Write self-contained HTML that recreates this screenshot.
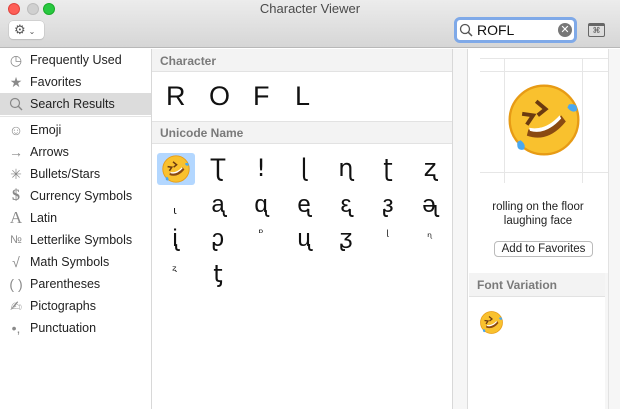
<!DOCTYPE html><html><head><meta charset="utf-8"><style>
*{margin:0;padding:0;box-sizing:border-box}
body{width:620px;height:409px;overflow:hidden;font-family:"Liberation Sans","DejaVu Sans",sans-serif;background:#fff;position:relative;font-size:12px;color:#222}
.abs{position:absolute}
#tb{left:0;top:0;width:620px;height:48px;background:linear-gradient(#ececec,#d6d6d6);border-bottom:1px solid #b8b8b8}
.dot{width:12px;height:12px;border-radius:50%;top:3px}
#side{left:0;top:49px;width:152px;height:360px;background:#fff;border-right:1px solid #d8d8d8}
.it{position:absolute;left:0;width:151px;height:22px;line-height:22px;padding-left:30px;font-size:12.5px;color:#222}
.ic{position:absolute;left:7px;top:0;width:18px;text-align:center;color:#8a8a8a;font-size:14px}
.hd{background:#f3f3f3;color:#7a7a7a;font-weight:bold;font-size:12px;padding-left:8px;line-height:22px;height:23px;border-bottom:1px solid #e2e2e2}
.g{position:absolute;width:40px;text-align:center;font-family:"DejaVu Sans",sans-serif;color:#111}
</style></head><body>
<div id="tb" class="abs"></div>
<div class="abs dot" style="left:8px;background:#fe5f57;border:1px solid #e0443e"></div>
<div class="abs dot" style="left:27px;background:#d0d0d0;border:1px solid #bdbdbd"></div>
<div class="abs dot" style="left:43px;background:#28c840;border:1px solid #1aab29"></div>
<div class="abs" style="left:0;top:1px;width:620px;text-align:center;font-size:13px;color:#4a4a4a">Character Viewer</div>
<div class="abs" style="left:9px;top:21px;width:35px;height:18px;background:#fff;border-radius:4px;box-shadow:0 0 0 0.5px #c0c0c0,0 1px 1px rgba(0,0,0,.15);font-size:13px;color:#555;line-height:18px;padding-left:5px">⚙<span style="font-size:8px;margin-left:3px">⌄</span></div>
<div class="abs" style="left:454px;top:17px;width:123px;height:26px;border:3px solid #7fa9e8;border-radius:6px;background:#fff"></div>
<svg class="abs" style="left:459px;top:23px" width="14" height="14"><circle cx="6" cy="6" r="4.5" fill="none" stroke="#555" stroke-width="1.3"/><line x1="9.3" y1="9.3" x2="13" y2="13" stroke="#555" stroke-width="1.5"/></svg>
<div class="abs" style="left:477px;top:22px;font-size:14px;color:#111">ROFL</div>
<div class="abs" style="left:558px;top:23px;width:14px;height:14px;border-radius:50%;background:#777;color:#fff;font-size:11px;line-height:14px;text-align:center;font-weight:bold">✕</div>
<div class="abs" style="left:588px;top:23px;width:17px;height:14px;border:1px solid #666;border-top:3px solid #666;border-radius:2px;font-size:8px;text-align:center;line-height:9px;color:#555">⌘</div>

<div id="side" class="abs">
<div class="it" style="top:0"><span class="ic">◷</span>Frequently Used</div>
<div class="it" style="top:22px"><span class="ic">★</span>Favorites</div>
<div class="it" style="top:44px;background:#dcdcdc"><svg class="abs" style="left:9px;top:4px" width="14" height="14"><circle cx="6" cy="6" r="4.5" fill="none" stroke="#888" stroke-width="1.2"/><line x1="9.3" y1="9.3" x2="13" y2="13" stroke="#888" stroke-width="1.4"/></svg>Search Results</div>
<div class="abs" style="left:0;top:67px;width:151px;height:1px;background:#e5e5e5"></div>
<div class="it" style="top:70px"><span class="ic">☺</span>Emoji</div>
<div class="it" style="top:92px"><span class="ic">→</span>Arrows</div>
<div class="it" style="top:114px"><span class="ic">✳</span>Bullets/Stars</div>
<div class="it" style="top:136px"><span class="ic" style="font-family:'Liberation Serif';font-size:16px;font-weight:bold">$</span>Currency Symbols</div>
<div class="it" style="top:158px"><span class="ic" style="font-family:'Liberation Serif';font-size:17px">A</span>Latin</div>
<div class="it" style="top:180px"><span class="ic" style="font-size:11px">№</span>Letterlike Symbols</div>
<div class="it" style="top:202px"><span class="ic">√</span>Math Symbols</div>
<div class="it" style="top:224px"><span class="ic">( )</span>Parentheses</div>
<div class="it" style="top:246px"><span class="ic">✍</span>Pictographs</div>
<div class="it" style="top:268px"><span class="ic">•,</span>Punctuation</div>
</div>

<div class="abs" style="left:152px;top:49px;width:301px;height:360px;background:#fff;border-right:1px solid #d8d8d8">
<div class="hd" style="padding-top:1px">Character</div>
<div style="height:49px;font-size:27px;color:#111;line-height:48px;padding-left:14px"><span style="display:inline-block;width:43px">R</span><span style="display:inline-block;width:44px">O</span><span style="display:inline-block;width:42px">F</span><span>L</span></div>
<div class="hd" style="border-top:1px solid #e2e2e2">Unicode Name</div>
</div>
<div class="abs" style="left:453px;top:49px;width:15px;height:360px;background:#f6f6f6;border-right:1px solid #dcdcdc"></div>
<div class="abs" style="left:608px;top:49px;width:12px;height:360px;background:#f6f6f6;border-left:1px solid #e2e2e2"></div>

<div class="abs" style="left:157px;top:153px;width:38px;height:32px;background:#b3d7ff;border-radius:3px"></div>
<svg width="0" height="0" style="position:absolute"><defs><g id="em"><circle cx="50" cy="50" r="44" fill="#f9c12e"/><circle cx="50" cy="50" r="44" fill="none" stroke="#e79b15" stroke-width="3"/><path d="M28 70 Q55 80 78 52 L72 44 Q52 66 30 62Z" fill="#8a4a12"/><path d="M32 64 Q52 70 72 48 L70 44 Q52 64 31 60Z" fill="#fff"/><path d="M40 26 L52 36 L42 44 M22 42 L36 44 L28 56" fill="none" stroke="#6b3a10" stroke-width="5"/><path d="M82 30 q12 -2 10 8 q-6 4 -12 -4z M16 78 q-2 12 8 10 q4 -6 -4 -12z" fill="#4aa8f0"/></g></defs></svg>
<svg class="abs" style="left:161px;top:154px" width="30" height="30" viewBox="0 0 100 100"><use href="#em"/></svg>
<div class="g" style="left:198px;top:154px;font-size:24px">Ʈ</div>
<div class="g" style="left:241px;top:154px;font-size:24px">!</div>
<div class="g" style="left:284px;top:154px;font-size:24px">ɭ</div>
<div class="g" style="left:326px;top:154px;font-size:24px">ɳ</div>
<div class="g" style="left:368px;top:154px;font-size:24px">ʈ</div>
<div class="g" style="left:410px;top:154px;font-size:24px">ʐ</div>
<div class="g" style="left:155px;top:204px;font-size:11px">ɩ</div>
<div class="g" style="left:198px;top:190px;font-size:24px">ᶏ</div>
<div class="g" style="left:241px;top:190px;font-size:24px">ᶐ</div>
<div class="g" style="left:284px;top:190px;font-size:24px">ᶒ</div>
<div class="g" style="left:326px;top:190px;font-size:24px">ᶓ</div>
<div class="g" style="left:368px;top:190px;font-size:24px">ᶔ</div>
<div class="g" style="left:410px;top:190px;font-size:24px">ᶕ</div>
<div class="g" style="left:155px;top:224px;font-size:24px">ᶖ</div>
<div class="g" style="left:198px;top:224px;font-size:24px">ᶗ</div>
<div class="g" style="left:241px;top:226px;font-size:12px">ᶛ</div>
<div class="g" style="left:284px;top:224px;font-size:24px">ᶙ</div>
<div class="g" style="left:326px;top:224px;font-size:24px">ᶚ</div>
<div class="g" style="left:368px;top:228px;font-size:14px">ᶩ</div>
<div class="g" style="left:410px;top:230px;font-size:12px">ᶯ</div>
<div class="g" style="left:155px;top:264px;font-size:13px">ᶼ</div>
<div class="g" style="left:198px;top:260px;font-size:24px">ƫ</div>

<div class="abs" style="left:480px;top:58px;width:128px;height:1px;background:#e6e6e6"></div>
<div class="abs" style="left:480px;top:71px;width:128px;height:1px;background:#e6e6e6"></div>
<div class="abs" style="left:480px;top:172px;width:128px;height:1px;background:#e6e6e6"></div>
<div class="abs" style="left:504px;top:58px;width:1px;height:125px;background:#e6e6e6"></div>
<div class="abs" style="left:582px;top:58px;width:1px;height:125px;background:#e6e6e6"></div>
<svg class="abs" style="left:505px;top:81px" width="78" height="78" viewBox="0 0 100 100"><use href="#em"/></svg>
<div class="abs" style="left:468px;top:200px;width:140px;text-align:center;font-size:11.5px;line-height:14px;color:#222">rolling on the floor<br>laughing face</div>
<div class="abs" style="left:494px;top:241px;width:99px;height:16px;border:1px solid #bbb;border-radius:4px;background:#fff;text-align:center;font-size:11.5px;line-height:14px;color:#222">Add to Favorites</div>
<div class="abs" style="left:469px;top:273px;width:136px;height:24px;background:#f3f3f3;border-bottom:1px solid #e2e2e2;color:#7a7a7a;font-weight:bold;line-height:24px;padding-left:8px">Font Variation</div>
<div class="abs" style="left:605px;top:273px;width:3px;height:136px;background:#f6f6f6"></div>
<svg class="abs" style="left:479px;top:310px" width="25" height="25" viewBox="0 0 100 100"><use href="#em"/></svg>
</body></html>
